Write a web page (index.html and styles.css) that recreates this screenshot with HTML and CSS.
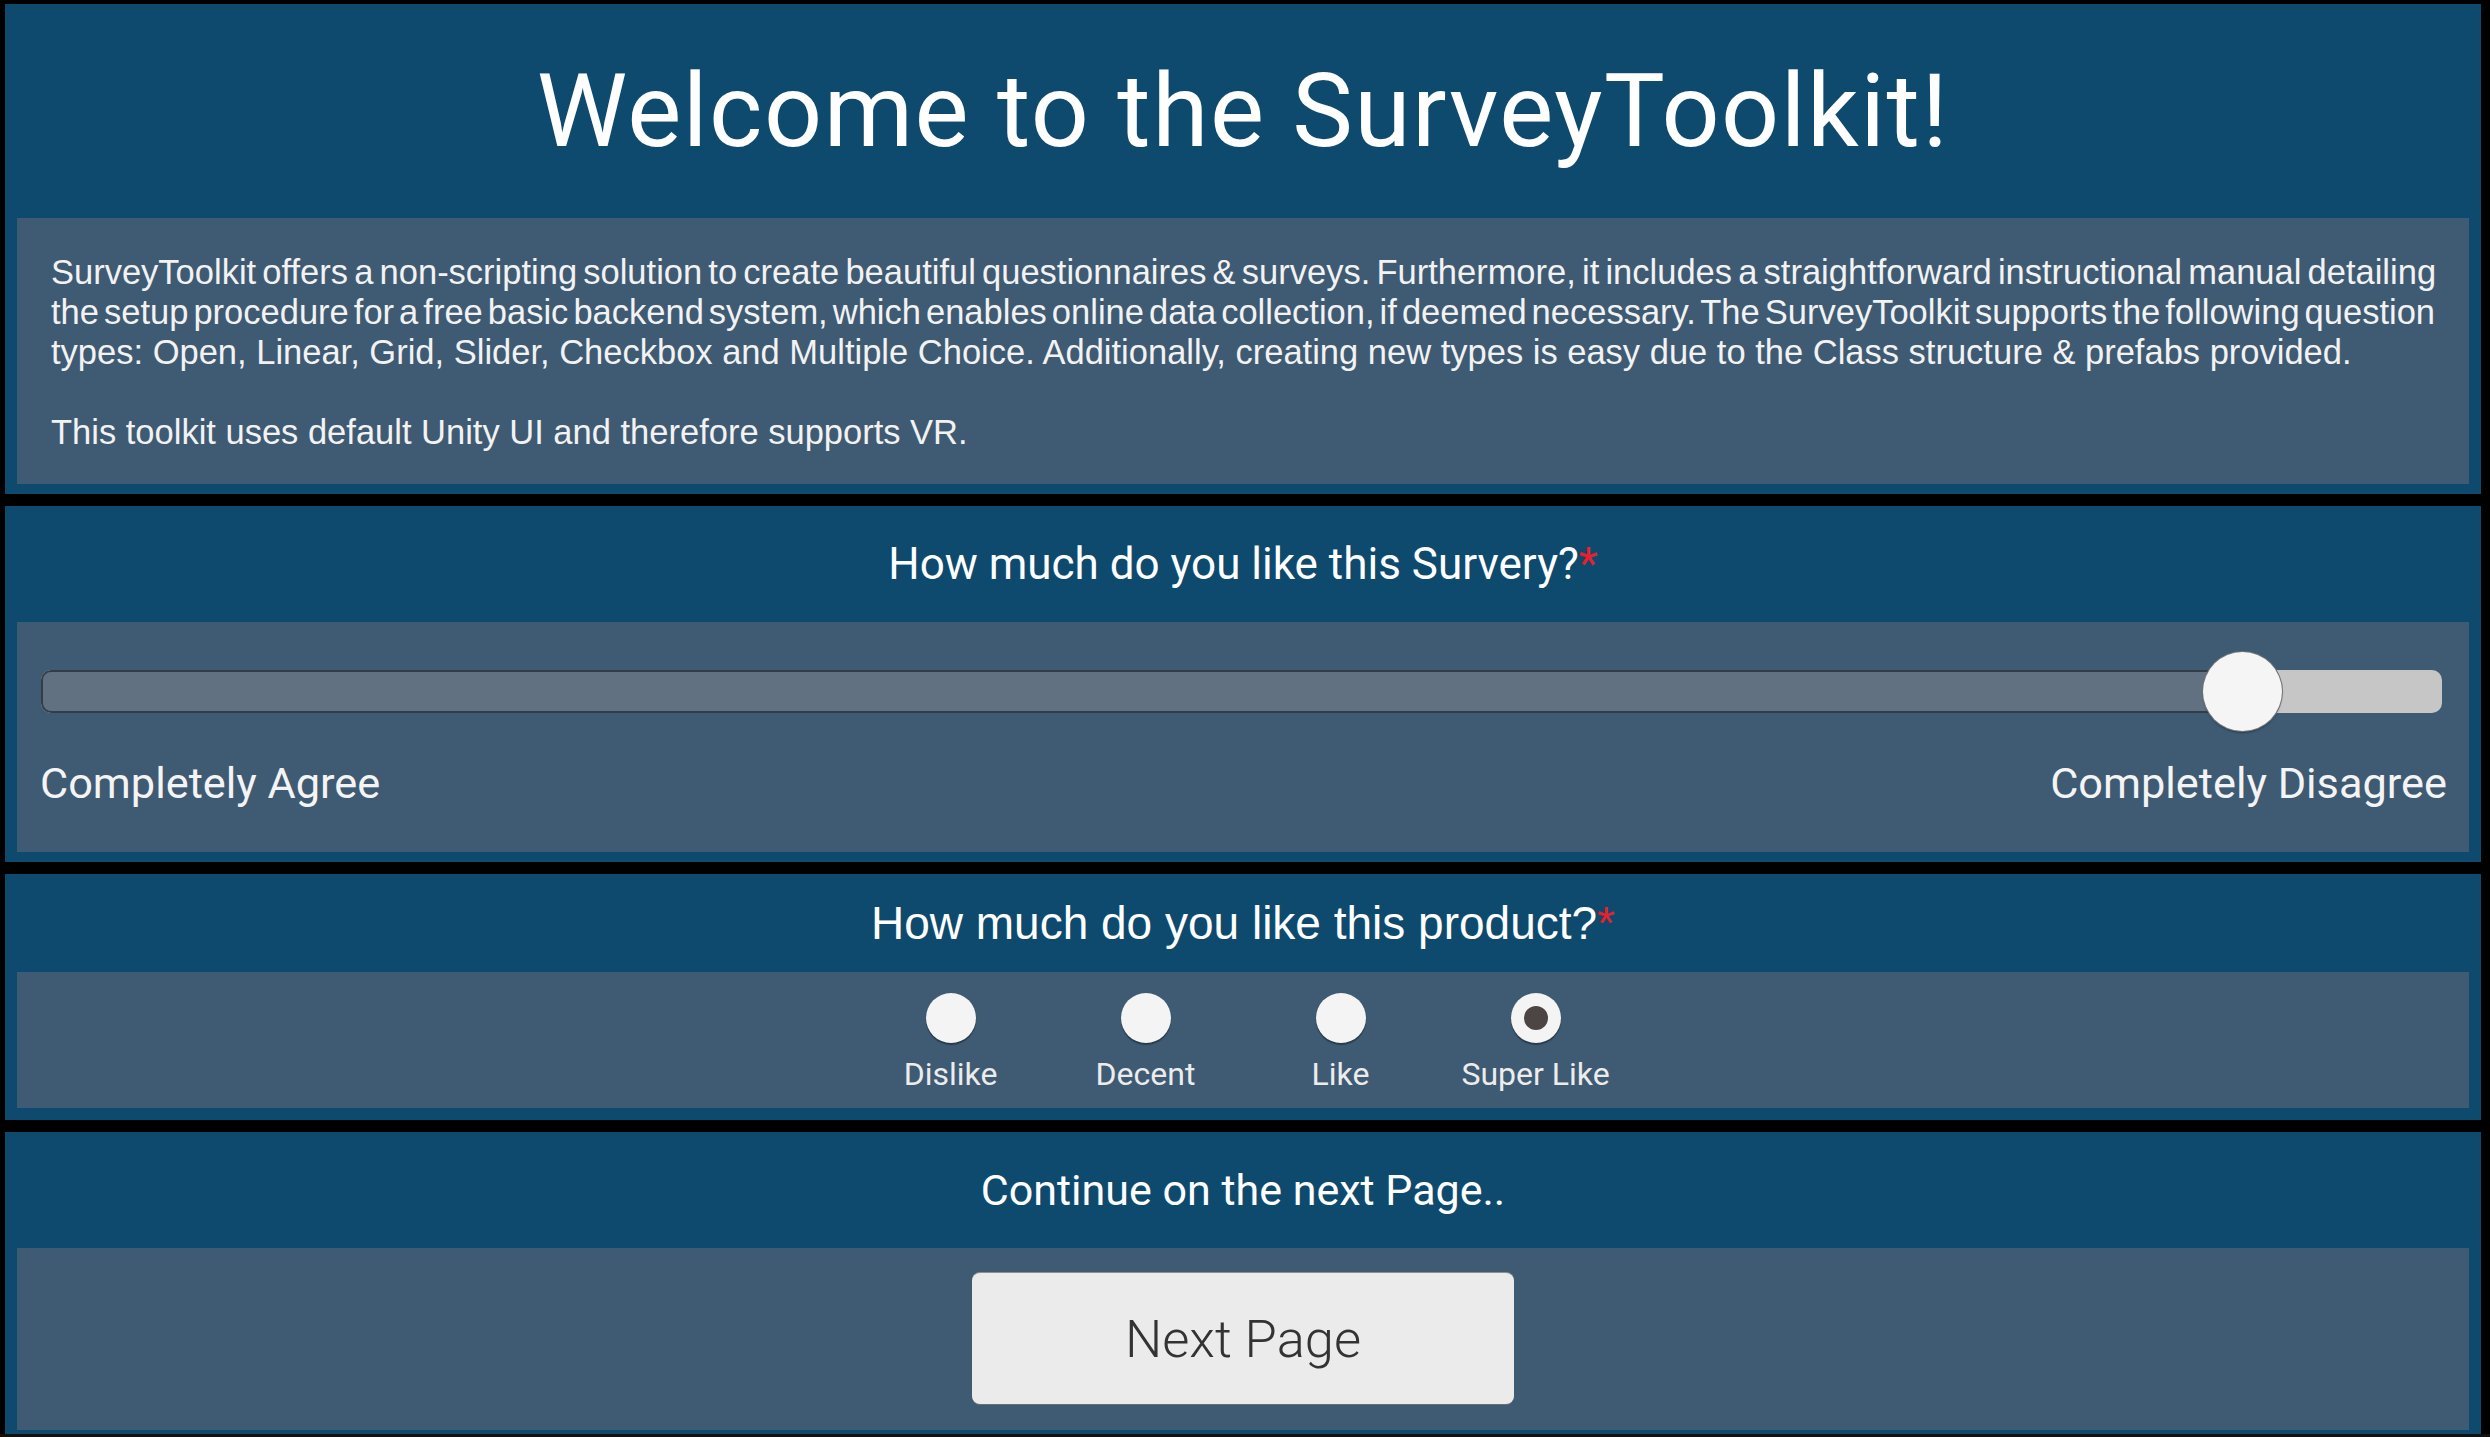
FILE: index.html
```html
<!DOCTYPE html>
<html lang="en">
<head>
<meta charset="utf-8">
<title>SurveyToolkit</title>
<link rel="stylesheet" href="styles.css">
</head>
<body>
<main class="page">
  <section class="panel panel-intro">
    <header class="panel-head head-intro">
      <h1 class="title">Welcome to the SurveyToolkit!</h1>
    </header>
    <div class="panel-body intro-body">
      <p class="intro-text"><span class="line line-a">SurveyToolkit offers a non-scripting solution to create beautiful questionnaires &amp; surveys. Furthermore, it includes a straightforward instructional manual detailing</span><span class="line line-b">the setup procedure for a free basic backend system, which enables online data collection, if deemed necessary. The SurveyToolkit supports the following question</span><span class="line">types: Open, Linear, Grid, Slider, Checkbox and Multiple Choice. Additionally, creating new types is easy due to the Class structure &amp; prefabs provided.</span></p>
      <p class="intro-text intro-second">This toolkit uses default Unity UI and therefore supports VR.</p>
    </div>
  </section>

  <section class="panel panel-slider">
    <header class="panel-head head-std">
      <h2 class="question">How much do you like this Survery?<span class="req">*</span></h2>
    </header>
    <div class="panel-body slider-body">
      <div class="slider">
        <div class="track"></div>
        <div class="track-fill" style="width: 91.7%"></div>
        <div class="knob" style="left: 91.7%"></div>
      </div>
      <div class="slider-labels">
        <span class="slider-label">Completely Agree</span>
        <span class="slider-label">Completely Disagree</span>
      </div>
    </div>
  </section>

  <section class="panel panel-choice">
    <header class="panel-head head-choice">
      <h2 class="question question-arial">How much do you like this product?<span class="req">*</span></h2>
    </header>
    <div class="panel-body choice-body">
      <div class="option"><span class="radio"></span><span class="option-label">Dislike</span></div>
      <div class="option"><span class="radio"></span><span class="option-label">Decent</span></div>
      <div class="option"><span class="radio"></span><span class="option-label">Like</span></div>
      <div class="option"><span class="radio radio-on"><span class="radio-dot"></span></span><span class="option-label">Super Like</span></div>
    </div>
  </section>

  <section class="panel panel-next">
    <header class="panel-head head-std">
      <h2 class="question question-next">Continue on the next Page..</h2>
    </header>
    <div class="panel-body next-body">
      <button class="next-btn" type="button">Next Page</button>
    </div>
  </section>
</main>
</body>
</html>
```

FILE: styles.css
```css
html {
  background: #111111;
  overflow: hidden;
}

body {
  margin: 0;
  background: #000000;
  height: 1434px;
  overflow: hidden;
}

.page {
  padding: 4px 9px 0 5px;
  display: flex;
  flex-direction: column;
  gap: 12px;
}

.panel {
  background: #0e4a6e;
  padding: 0 12px 10px;
}

.panel-choice {
  padding-bottom: 12px;
}

.panel-next {
  padding-bottom: 4px;
}

.panel-head {
  display: flex;
  align-items: center;
  justify-content: center;
}

.head-intro {
  height: 214px;
}

.head-std {
  height: 116px;
}

.head-choice {
  height: 98px;
}

.panel-body {
  background: #3e5b73;
}

.title {
  margin: 0;
  font-family: Roboto, "Open Sans", sans-serif;
  font-weight: 400;
  font-size: 102px;
  line-height: 1;
  color: #ffffff;
  letter-spacing: 1.5px;
}

.intro-body {
  height: 266px;
  box-sizing: border-box;
  padding: 34px 34px 0;
}

.intro-text {
  margin: 0;
  font-family: "Liberation Sans", Arial, sans-serif;
  font-size: 34.5px;
  line-height: 40px;
  color: #f2f2f2;
  white-space: nowrap;
}

.line {
  display: block;
}

.line-a {
  word-spacing: -3.4px;
}

.line-b {
  word-spacing: -4.55px;
}

.intro-second {
  margin-top: 40px;
}

.question {
  margin: 0;
  font-family: Roboto, "Open Sans", sans-serif;
  font-weight: 400;
  font-size: 44px;
  line-height: 1;
  color: #ffffff;
}

.question-arial {
  font-family: "Liberation Sans", Arial, sans-serif;
  font-size: 46px;
}

.question-next {
  font-size: 43px;
}

.req {
  color: #e8202e;
}

.slider-body {
  height: 230px;
  box-sizing: border-box;
  padding: 48px 27px 0 24px;
}

.slider {
  position: relative;
  height: 43px;
}

.track {
  height: 43px;
  border-radius: 10px;
  background: #c6c6c6;
}

.track-fill {
  position: absolute;
  left: 0;
  top: 0;
  height: 43px;
  box-sizing: border-box;
  background: #617181;
  border: 2px solid #333d47;
  border-right: none;
  border-radius: 10px 0 0 10px;
}

.knob {
  position: absolute;
  top: -18px;
  width: 79px;
  height: 79px;
  margin-left: -40px;
  border-radius: 50%;
  background: #f5f5f5;
  box-shadow: 0 0 0 1px #6f7378, 0 2px 2px rgba(0, 0, 0, 0.35);
}

.slider-labels {
  display: flex;
  justify-content: space-between;
  margin-top: 49px;
  margin-right: -5px;
  margin-left: -1px;
}

.slider-label {
  font-family: Roboto, "Open Sans", sans-serif;
  font-size: 43.3px;
  line-height: 1;
  color: #f4f4f4;
}

.choice-body {
  height: 136px;
  box-sizing: border-box;
  display: flex;
  justify-content: center;
  padding-top: 21px;
}

.option {
  width: 195px;
  display: flex;
  flex-direction: column;
  align-items: center;
  gap: 15px;
}

.radio {
  width: 50px;
  height: 50px;
  border-radius: 50%;
  background: #f4f4f4;
  box-shadow: 0 2px 1px rgba(0, 0, 0, 0.35);
  display: flex;
  align-items: center;
  justify-content: center;
}

.radio-dot {
  width: 24px;
  height: 24px;
  border-radius: 50%;
  background: #4d4444;
}

.option-label {
  font-family: Roboto, "Open Sans", sans-serif;
  font-size: 32px;
  line-height: 1;
  color: #ececec;
}

.next-body {
  height: 182px;
  box-sizing: border-box;
  display: flex;
  justify-content: center;
  padding-top: 25px;
}

.next-btn {
  width: 542px;
  height: 131px;
  border: none;
  border-radius: 8px;
  background: #ebebeb;
  box-shadow: 0 -1px 0 #8a8f94, 0 1px 0 #6a6f74;
  font-family: Roboto, "Open Sans", sans-serif;
  font-weight: 300;
  font-size: 52.5px;
  color: #333333;
  padding: 0;
}
```
